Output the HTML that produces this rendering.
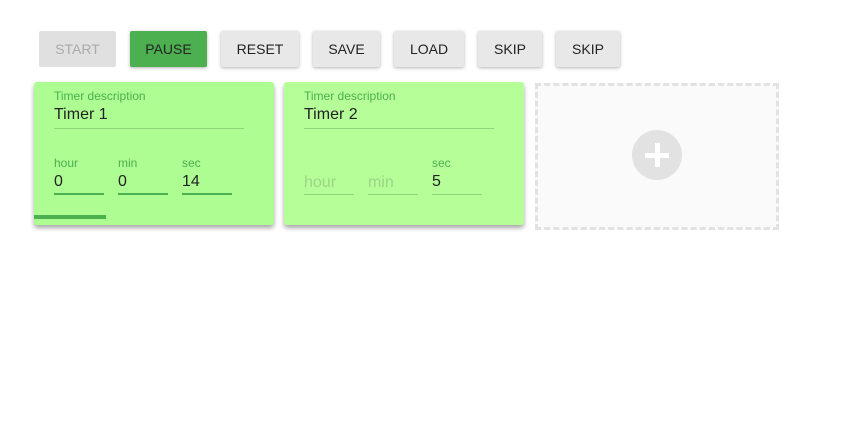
<!DOCTYPE html>
<html><head><style>
body{margin:0;width:864px;height:444px;background:#fff;font-family:"Liberation Sans",sans-serif;position:relative;overflow:hidden}
.b{position:absolute;top:31px;height:36px;line-height:36px;text-align:center;font-size:14px;color:#222;background:#e8e8e8;border-radius:2px;box-shadow:0 1px 3px rgba(0,0,0,.3)}
.card{position:absolute;top:82px;width:240px;height:143px;border-radius:3px;box-shadow:0 3px 5px rgba(0,0,0,.35);overflow:hidden}
.lbl{position:absolute;font-size:12px;color:#4caf50}
.val{position:absolute;font-size:16px;color:#222}
.ln{position:absolute;height:1px;background:#8fd67a}
.ph{position:absolute;font-size:16px;color:#9ad686}
</style></head><body>
<div class="b" style="left:39px;width:77px;color:#aaa;background:#e0e0e0;box-shadow:none">START</div>
<div class="b" style="left:130px;width:77px;background:#4caf50">PAUSE</div>
<div class="b" style="left:221px;width:78px">RESET</div>
<div class="b" style="left:313px;width:67px">SAVE</div>
<div class="b" style="left:394px;width:70px">LOAD</div>
<div class="b" style="left:478px;width:64px">SKIP</div>
<div class="b" style="left:556px;width:64px">SKIP</div>

<div class="card" style="left:34px;background:#adfd93">
<div class="lbl" style="left:20px;top:7px">Timer description</div>
<div class="val" style="left:20px;top:24px">Timer 1</div>
<div class="ln" style="left:20px;top:46px;width:190px"></div>
<div class="lbl" style="left:20px;top:74px">hour</div><div class="val" style="left:20px;top:91px">0</div><div class="ln" style="left:20px;top:111px;width:50px;height:2px;background:#4caf50"></div>
<div class="lbl" style="left:84px;top:74px">min</div><div class="val" style="left:84px;top:91px">0</div><div class="ln" style="left:84px;top:111px;width:50px;height:2px;background:#4caf50"></div>
<div class="lbl" style="left:148px;top:74px">sec</div><div class="val" style="left:148px;top:91px">14</div><div class="ln" style="left:148px;top:111px;width:50px;height:2px;background:#4caf50"></div>
<div style="position:absolute;left:0;top:133px;width:72px;height:4px;background:#4caf50"></div>
</div>

<div class="card" style="left:284px;background:#b6fe98">
<div class="lbl" style="left:20px;top:7px">Timer description</div>
<div class="val" style="left:20px;top:24px">Timer 2</div>
<div class="ln" style="left:20px;top:46px;width:190px"></div>
<div class="ph" style="left:20px;top:92px">hour</div><div class="ln" style="left:20px;top:112px;width:50px"></div>
<div class="ph" style="left:84px;top:92px">min</div><div class="ln" style="left:84px;top:112px;width:50px"></div>
<div class="lbl" style="left:148px;top:74px">sec</div><div class="val" style="left:148px;top:91px">5</div><div class="ln" style="left:148px;top:112px;width:50px"></div>
</div>

<div style="position:absolute;left:535px;top:83px;width:244px;height:147px;box-sizing:border-box;border:3px dashed #e2e2e2;background:#fafafa"></div>
<div style="position:absolute;left:632px;top:130px;width:50px;height:50px;border-radius:50%;background:#e2e2e2"></div>
<div style="position:absolute;left:645px;top:153px;width:24px;height:5px;background:#fff"></div>
<div style="position:absolute;left:655px;top:143px;width:5px;height:24px;background:#fff"></div>
</body></html>
